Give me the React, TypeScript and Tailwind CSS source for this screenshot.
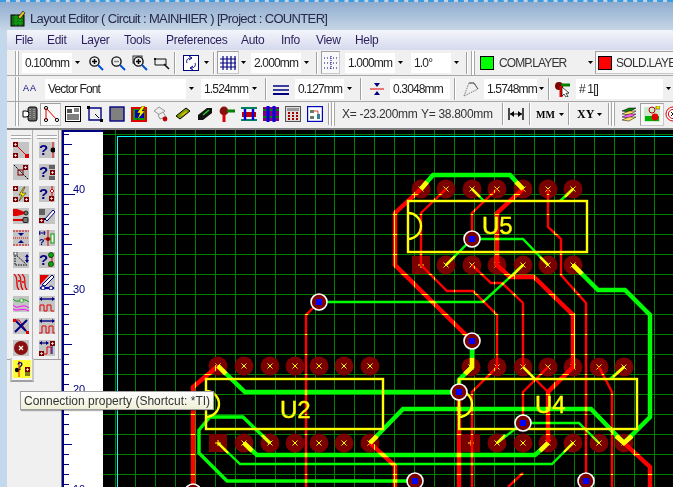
import React from "react";

type Pt = [number, number];
type Trace = { pts: Pt[]; w: number };

const FONT = "font-['Liberation_Sans',Arial,sans-serif]";

// pcb data, in page coordinates
const redTraces: Trace[] = [
  { w: 4, pts: [[421, 189], [395, 213], [395, 265], [472, 341]] },
  { w: 2, pts: [[446, 189], [421, 213], [421, 265], [447, 291], [473, 291], [497, 315], [497, 367], [472, 392], [472, 487]] },
  { w: 2, pts: [[472, 265], [491, 283], [502, 283], [523, 303], [523, 367], [548, 392]] },
  { w: 4, pts: [[523, 189], [497, 213], [497, 265], [510, 277], [534, 277], [573, 315], [573, 367], [548, 392], [548, 443]] },
  { w: 2, pts: [[497, 189], [472, 213], [472, 239]] },
  { w: 2, pts: [[548, 189], [548, 227], [561, 239], [561, 275], [586, 303], [586, 481]] },
  { w: 2, pts: [[548, 367], [523, 392], [523, 423]] },
  { w: 2, pts: [[599, 367], [612, 392], [612, 487]] },
  { w: 4, pts: [[459, 392], [459, 487]] },
  { w: 4, pts: [[624, 443], [650, 467], [650, 487]] },
  { w: 2, pts: [[523, 473], [508, 487]] },
  { w: 4, pts: [[218, 366], [193, 387], [193, 487]] },
  { w: 2, pts: [[319, 302], [306, 315], [306, 487]] },
  { w: 4, pts: [[370, 443], [395, 466], [395, 487]] },
];

const greenTraces: Trace[] = [
  { w: 4, pts: [[421, 189], [433, 175], [510, 175], [523, 189]] },
  { w: 2, pts: [[446, 265], [472, 239], [523, 239], [548, 265]] },
  { w: 2, pts: [[472, 189], [484, 201]] },
  { w: 2, pts: [[573, 189], [560, 201]] },
  { w: 2, pts: [[319, 302], [483, 302], [523, 265]] },
  { w: 4, pts: [[573, 265], [598, 290], [625, 290], [650, 315], [650, 417], [624, 443]] },
  { w: 4, pts: [[472, 341], [472, 367], [459, 380], [459, 392]] },
  { w: 4, pts: [[218, 366], [245, 392], [459, 392]] },
  { w: 4, pts: [[370, 443], [403, 409], [591, 409], [624, 443]] },
  { w: 2, pts: [[218, 443], [240, 464], [552, 464], [573, 443]] },
  { w: 4, pts: [[244, 443], [257, 455], [535, 455], [548, 443]] },
  { w: 3, pts: [[415, 481], [227, 481], [199, 453], [199, 430], [210, 417], [243, 417], [270, 443]] },
  { w: 2, pts: [[497, 443], [523, 423], [579, 423], [599, 443]] },
  { w: 2, pts: [[523, 367], [535, 379]] },
  { w: 2, pts: [[624, 367], [610, 379]] },
];

const yellowStubs: Trace[] = [
  { w: 4, pts: [[421, 189], [427, 182]] },
  { w: 4, pts: [[523, 189], [516, 182]] },
  { w: 2, pts: [[472, 189], [480, 197]] },
  { w: 2, pts: [[573, 189], [565, 197]] },
  { w: 2, pts: [[446, 265], [455, 256]] },
  { w: 2, pts: [[548, 265], [540, 257]] },
  { w: 2, pts: [[523, 265], [512, 276]] },
  { w: 4, pts: [[573, 265], [582, 274]] },
  { w: 4, pts: [[472, 358], [472, 367], [465, 374]] },
  { w: 2, pts: [[523, 367], [533, 377]] },
  { w: 2, pts: [[624, 367], [613, 377]] },
  { w: 2, pts: [[497, 443], [505, 435]] },
  { w: 2, pts: [[573, 443], [564, 452]] },
  { w: 4, pts: [[548, 443], [540, 451]] },
  { w: 4, pts: [[616, 436], [624, 443], [632, 436]] },
  { w: 4, pts: [[218, 366], [226, 374]] },
  { w: 2, pts: [[218, 443], [228, 453]] },
  { w: 4, pts: [[244, 443], [252, 451]] },
  { w: 2, pts: [[270, 443], [262, 435]] },
  { w: 4, pts: [[370, 443], [377, 436]] },
];

const chips = [
  { top: 189, bottom: 265, x: [421, 446, 472, 497, 523, 548, 573], box: [408, 201, 587, 252], label: "U5", lx: 482, ly: 234 },
  { top: 367, bottom: 443, x: [471, 497, 523, 548, 573, 599, 624], box: [459, 379, 637, 429], label: "U4", lx: 535, ly: 413 },
  { top: 366, bottom: 443, x: [218, 244, 270, 295, 319, 344, 370], box: [206, 379, 383, 429], label: "U2", lx: 280, ly: 418 },
];

const vias: Pt[] = [[472, 239], [319, 302], [472, 341], [459, 392], [523, 423], [586, 481], [415, 481], [193, 492]];

const gridX = Array.from({ length: 29 }, (_, i) => Math.round(115 + i * 19.95));
const gridY = Array.from({ length: 18 }, (_, i) => 134 + i * 20);

const toPoints = (pts: Pt[]) => pts.map((p) => p.join(",")).join(" ");

function Lines({ list, color }: { list: Trace[]; color: string }) {
  return (
    <>
      {list.map((t, i) => (
        <polyline key={i} points={toPoints(t.pts)} fill="none" stroke={color} strokeWidth={t.w + 0.4} strokeLinejoin="miter" />
      ))}
    </>
  );
}

function Grid({ color }: { color: string }) {
  return (
    <g shapeRendering="crispEdges">
      {gridX.map((x) => (
        <line key={x} x1={x + 0.5} x2={x + 0.5} y1={130} y2={487} stroke={color} />
      ))}
      {gridY.map((y) => (
        <line key={y} x1={103} x2={673} y1={y + 0.5} y2={y + 0.5} stroke={color} />
      ))}
    </g>
  );
}

function Pad({ x, y, square }: { x: number; y: number; square?: boolean }) {
  return (
    <g>
      {square ? (
        <rect x={x - 9} y={y - 9} width={18} height={18} fill="#7b0000" />
      ) : (
        <circle cx={x} cy={y} r={9.5} fill="#7b0000" />
      )}
      {square ? (
        <path d={`M${x - 3} ${y}h6M${x} ${y - 3}v6`} stroke="#ffff00" />
      ) : (
        <path d={`M${x - 2.5} ${y - 2.5}l5 5M${x + 2.5} ${y - 2.5}l-5 5`} stroke="#ffff00" />
      )}
    </g>
  );
}

function Board() {
  return (
    <svg viewBox="103 130 570 357" className="block h-[357px] w-[570px]">
      <rect x={103} y={130} width={570} height={357} fill="#000" />
      <Grid color="#008000" />
      <g shapeRendering="crispEdges">
        <line x1={117.5} x2={117.5} y1={136} y2={487} stroke="#00ffff" />
        <line x1={117} x2={673} y1={136.5} y2={136.5} stroke="#00ffff" />
      </g>
      {chips.map((c) => (
        <g key={c.label}>
          {c.x.map((x, i) => (
            <React.Fragment key={x}>
              <Pad x={x} y={c.top} />
              <Pad x={x} y={c.bottom} square={i === 0} />
            </React.Fragment>
          ))}
        </g>
      ))}
      <mask id="on-red" maskUnits="userSpaceOnUse" x={103} y={130} width={570} height={357}>
        <Lines list={redTraces} color="#fff" />
      </mask>
      <Lines list={redTraces} color="#ff0000" />
      <g mask="url(#on-red)">
        <Grid color="#ffff00" />
      </g>
      <g className="mix-blend-screen">
        <Lines list={greenTraces} color="#00ff00" />
      </g>
      <Lines list={yellowStubs} color="#ffff00" />
      {chips.map((c) => {
        const [x1, y1, x2, y2] = c.box;
        return (
          <g key={c.label} fill="none" stroke="#ffff00" strokeWidth={2.4}>
            <rect x={x1} y={y1} width={x2 - x1} height={y2 - y1} />
            <path d={`M${x1} ${y1 + 12}A13 13 0 0 1 ${x1} ${y1 + 38}`} />
          </g>
        );
      })}
      {chips.map((c) => (
        <text
          key={c.label}
          x={c.lx}
          y={c.ly}
          fill="#ffff00"
          stroke="#ffff00"
          strokeWidth={0.4}
          className="font-['Liberation_Sans',Arial,sans-serif] text-[24px]"
        >
          {c.label}
        </text>
      ))}
      {vias.map(([x, y]) => (
        <g key={`${x}-${y}`}>
          <circle cx={x} cy={y} r={8} fill="#7b0000" stroke="#fff" strokeWidth={1.6} />
          <rect x={x - 3} y={y - 3} width={6} height={6} fill="#0000ff" />
        </g>
      ))}
    </svg>
  );
}

const rulerTicks = Array.from({ length: 36 }, (_, i) => 134 + i * 10);

function Ruler() {
  return (
    <svg viewBox="62 130 41 357" className="block h-[357px] w-[41px] shrink-0">
      <rect x={62} y={130} width={41} height={357} fill="#fff" />
      <path d="M63 130V487M62 131H103" stroke="#000080" strokeWidth={2} fill="none" />
      {rulerTicks.map((y) => {
        const mod = (y - 194 + 1000) % 100;
        const len = mod === 0 ? 75 : mod === 50 ? 72 : 69;
        return <line key={y} x1={63} x2={len} y1={y + 0.5} y2={y + 0.5} stroke="#000080" />;
      })}
      {[[40, 194], [30, 294], [20, 394], [10, 494]].map(([n, y]) => (
        <text key={n} x={73} y={y - 1} fill="#000080" className="font-['Liberation_Sans',Arial,sans-serif] text-[11px]">
          {n}
        </text>
      ))}
    </svg>
  );
}

function Drop({ className = "" }: { className?: string }) {
  return (
    <svg viewBox="0 0 5 3" className={`h-[3px] w-[5px] shrink-0 ${className}`}>
      <path d="M0 0h5L2.5 3z" fill="#000" />
    </svg>
  );
}

function Combo({ text, className, arrow = true }: { text: string; className: string; arrow?: boolean }) {
  return (
    <div className={`flex h-[20px] shrink-0 items-center justify-between overflow-hidden bg-white pl-[3px] text-[12px] tracking-[-0.85px] text-[#222] ${className}`}>
      <span className="whitespace-nowrap">{text}</span>
      {arrow && (
        <span className="flex h-full w-[10px] shrink-0 items-center justify-center bg-[#f0f0f0]">
          <Drop />
        </span>
      )}
    </div>
  );
}

function Sep({ className }: { className: string }) {
  return <div className={`h-[22px] w-[2px] shrink-0 border-l border-r border-l-[#a0a0a0] border-r-white ${className}`} />;
}

function Grip({ className }: { className: string }) {
  return <div className={`h-[24px] w-[4px] shrink-0 border-x border-x-[#a8a8a8] bg-white ${className}`} />;
}

function Ico({ children, className = "" }: { children: React.ReactNode; className?: string }) {
  return (
    <svg viewBox="0 0 16 16" className={`block h-[16px] w-[16px] shrink-0 ${className}`}>
      {children}
    </svg>
  );
}

const Pressed = ({ className, children }: { className: string; children: React.ReactNode }) => (
  <div className={`flex h-[23px] shrink-0 items-center justify-center border border-[#c8c8c8] border-t-[#a0a0a0] border-l-[#a0a0a0] bg-[#f8f8f8] ${className}`}>
    {children}
  </div>
);

function Mag({ mark, className }: { mark: "plus" | "minus" | "fit"; className: string }) {
  return (
    <Ico className={className}>
      {mark === "fit" && <rect x={1} y={1} width={9} height={7} fill="#ddd" stroke="#333" />}
      <circle cx={6.5} cy={6.5} r={4.6} fill="#eee" stroke="#111" strokeWidth={1.4} />
      <path d={mark === "minus" ? "M4 6.5h5" : "M4 6.5h5M6.5 4v5"} stroke={mark === "minus" ? "#888" : "#000"} strokeWidth={1.5} />
      <path d="M10 10l5 5" stroke="#0050d0" strokeWidth={2} />
    </Ico>
  );
}

// square pad used inside the small tool icons
const P = ({ x, y }: { x: number; y: number }) => (
  <g>
    <rect x={x} y={y} width={5} height={5} fill="#7b0000" />
    <path d={`M${x + 1} ${y + 2.5}h3M${x + 2.5} ${y + 1}v3`} stroke="#fff" strokeWidth={0.7} />
  </g>
);

const Q = ({ x = 0, y = 13, size = 15 }: { x?: number; y?: number; size?: number }) => (
  <text x={x} y={y} fill="#000080" fontWeight={700} className="font-['Liberation_Sans',Arial,sans-serif]" fontSize={size}>
    ?
  </text>
);

const leftTools: React.ReactNode[] = [
  <><path d="M3 3l11 11" stroke="#e00000" /><P x={0} y={0} /><P x={0} y={11} /><rect x={12} y={12} width={4} height={4} fill="#e00000" /></>,
  <><path d="M1 1l14 14" stroke="#000" strokeDasharray="2 1" /><P x={10} y={1} /><rect x={5} y={6} width={5} height={5} fill="none" stroke="#7b0000" /></>,
  <><P x={0} y={0} /><P x={0} y={11} /><P x={11} y={11} /><path d="M11 1L6 9h3l-3 6 7-8H9l3-6z" fill="#ffee00" stroke="#000" strokeWidth={0.5} /></>,
  <><path d="M0 1h4l8 3v2l-8 2H0z" fill="#e00000" /><circle cx={13} cy={5} r={2} fill="#777" stroke="#222" /><path d="M0 12h10" stroke="#e00000" strokeWidth={2} /><rect x={10} y={9.5} width={5} height={5} rx={1} fill="#777" stroke="#222" /></>,
  <><path d="M0 1h16M0 15h16" stroke="#e00000" strokeDasharray="2 1" /><path d="M0 8h16" stroke="#e00000" strokeDasharray="1 1" /><path d="M8 6L5 3h6zM8 10l-3 3h6z" fill="#000080" /></>,
  <><path d="M2 1v12h12M2 2l11 10" stroke="#000" strokeDasharray="1.5 1" fill="none" /><rect x={1} y={0} width={3} height={3} fill="#fff" stroke="#000" strokeWidth={0.6} /><path d="M14 3v7" stroke="#000080" strokeWidth={1.4} /><path d="M12 5l2-3 2 3M12 8l2 3 2-3" fill="#000080" /></>,
  <><path d="M1 0c6 5 0 10 5 16M5 0c6 5 0 10 5 16M9 0c6 5 0 10 5 16" stroke="#e00000" fill="none" strokeWidth={1.3} /><circle cx={6} cy={7} r={1} fill="#e00000" /><circle cx={10} cy={8} r={1} fill="#e00000" /></>,
  <><path d="M0 3c5 6 9-3 16 3" stroke="#00a000" fill="none" /><path d="M0 9c5 6 9-3 16 3" stroke="#ff00ff" fill="none" /><path d="M0 13c5 3 9-2 16 2" stroke="#ff00ff" fill="none" /><rect x={7} y={3} width={3} height={3} fill="#fff" stroke="#00a000" strokeWidth={0.6} /></>,
  <><path d="M1 2h5l8 12" stroke="#e00000" fill="none" /><path d="M2 14L14 2M3 3l10 10" stroke="#000080" strokeWidth={2} /><rect x={0} y={1} width={3} height={3} fill="#e00000" /><rect x={13} y={13} width={3} height={3} fill="#e00000" /></>,
  <><circle cx={8} cy={8} r={7} fill="#8a1010" /><path d="M6 6l4 4M10 6l-4 4" stroke="#fff" strokeWidth={1.2} /></>,
];

const rightTools: React.ReactNode[] = [
  <><Q /><path d="M14 0v16" stroke="#e00000" /><circle cx={14} cy={8} r={2.5} fill="#000" /></>,
  <><Q /><path d="M10 2h6M10 4h6M10 13h6M10 15h6" stroke="#000" /><P x={11} y={6} /></>,
  <><Q /><path d="M13 0v16" stroke="#e00000" /><path d="M13 3l2 2-2 2-2-2z" fill="#fff" stroke="#e00000" /><P x={10} y={10} /></>,
  <><path d="M0 2h6M0 4h6M0 6h6" stroke="#000" /><P x={0} y={10} /><path d="M5 11h5" stroke="#000" strokeDasharray="1 1" strokeWidth={2} /><path d="M6 11L14 2l2 2-8 9z" fill="#fff" stroke="#000080" /></>,
  <><path d="M1 1L0 3l1 2M5 1l1 2-1 2M0 3h6" stroke="#000080" fill="none" /><Q x={0} y={15} size={9} /><path d="M9 0v16M5 9h7" stroke="#e00000" /><circle cx={9} cy={9} r={2} fill="#a00000" /><rect x={12} y={4} width={3} height={9} fill="#fff" stroke="#00a000" /></>,
  <><Q /><path d="M10 5h3v6h-3v4" stroke="#e00000" fill="none" /><circle cx={12} cy={3} r={2.5} fill="#00b000" stroke="#000" strokeWidth={0.6} /><circle cx={12} cy={12} r={2.5} fill="#00b000" stroke="#000" strokeWidth={0.6} /></>,
  <><path d="M1 1h9L1 11z" fill="#e00000" /><path d="M1 14h14" stroke="#0000c0" strokeWidth={2} /><path d="M3 11L13 1l2 2L6 12z" fill="#fff" stroke="#000080" /><circle cx={4} cy={14} r={2} fill="#fff" stroke="#000080" /><circle cx={12} cy={14} r={2} fill="#fff" stroke="#000080" /></>,
  <><path d="M1 3h14" stroke="#000080" strokeWidth={1.4} /><path d="M0 3l3-2v4zM16 3l-3-2v4z" fill="#000080" /><path d="M1 15v-6h4v6h3V9h4v6h3" stroke="#e00000" fill="none" /></>,
  <><path d="M1 3h14" stroke="#000080" strokeWidth={1.4} /><path d="M0 3l3-2v4zM16 3l-3-2v4z" fill="#000080" /><path d="M0 15h3V8h4v7h3V8h4v7h2" stroke="#e00000" fill="none" /></>,
  <><path d="M1 3h8" stroke="#000080" strokeWidth={1.2} /><path d="M0 3l3-2v4zM10 3L7 1v4z" fill="#000080" /><P x={11} y={1} /><P x={0} y={11} /><path d="M5 14h3V7h4v7" stroke="#e00000" fill="none" /><path d="M13 6v8" stroke="#0000c0" /></>,
];

const rowThree: { cls: string; icon: React.ReactNode }[] = [
  { cls: "ml-[3px]", icon: <><rect x={6} y={1} width={9} height={14} rx={2} fill="#666" stroke="#000" /><path d="M8 3v10M12 3v10" stroke="#ccc" strokeDasharray="1 1" /><path d="M1 5h3a3 3 0 0 1 0 6H1z" fill="#fff" stroke="#000" /></> },
  { cls: "ml-[4px]", icon: null },
  { cls: "ml-[4px]", icon: <><rect x={0.5} y={0.5} width={15} height={15} fill="#fff" stroke="#000" /><path d="M2 3h5v4H2z" fill="#555" /><path d="M9 3h5M9 5h5M2 9h12M2 11h12M2 13h12" stroke="#000" /></> },
  { cls: "ml-[6px]", icon: <><path d="M2 2h12v12H2z" fill="none" stroke="#000080" strokeWidth={1.4} /><rect x={0} y={0} width={3} height={3} fill="#000" /><rect x={13} y={13} width={3} height={3} fill="#000" /><path d="M8 8l4 4" stroke="#000" /></> },
  { cls: "ml-[6px]", icon: <rect x={1} y={1} width={14} height={14} fill="#808080" stroke="#000080" strokeWidth={1.4} /> },
  { cls: "ml-[6px]", icon: <><rect x={1} y={2} width={14} height={13} fill="#00a000" stroke="#e00000" strokeWidth={2} /><rect x={4} y={4} width={9} height={8} fill="#0000c0" /><path d="M11 0L6 7h3L6 14l8-9h-3l3-5z" fill="#ffee00" stroke="#000" strokeWidth={0.4} /></> },
  { cls: "ml-[6px]", icon: <><path d="M1 5l5-4 6 4-5 4z" fill="#eee" stroke="#999" /><path d="M5 9l5-3 3 5-6 2z" fill="#eee" stroke="#999" /><circle cx={12} cy={13} r={2.4} fill="#c00000" /></> },
  { cls: "ml-[6px]", icon: <><path d="M1 10l10-8 4 3-10 8z" fill="#80a000" stroke="#000" /><path d="M6 9l5-4 1 1-5 4z" fill="#e0c000" /></> },
  { cls: "ml-[6px]", icon: <><path d="M1 9l9-7h5v5l-9 7H1z" fill="#111" /><path d="M6 9l6-5" stroke="#20d020" strokeWidth={1.6} /></> },
  { cls: "ml-[6px]", icon: <><circle cx={5} cy={5} r={4.4} fill="#8a1010" /><path d="M8 5h8" stroke="#008000" strokeWidth={3} /><path d="M5 8v8" stroke="#e00000" strokeWidth={3} /></> },
  { cls: "ml-[6px]", icon: <><path d="M0 2h16M0 14h16" stroke="#008060" strokeWidth={2} /><rect x={1} y={6} width={14} height={5} fill="#c00000" /><path d="M4 3v11M12 3v11" stroke="#0000e0" strokeWidth={2.4} /></> },
  { cls: "ml-[6px]", icon: <><rect x={0} y={1} width={16} height={14} fill="#800080" /><path d="M0 4h16M0 11h16" stroke="#008000" strokeWidth={2} /><path d="M5 0v16M11 0v16" stroke="#0000e0" strokeWidth={3} /></> },
  { cls: "ml-[6px]", icon: <><rect x={0.5} y={0.5} width={15} height={15} fill="#ddd" stroke="#555" /><rect x={2} y={2} width={12} height={3} fill="#999" /><path d="M3 7h2M7 7h2M11 7h2M3 10h2M7 10h2M11 10h2M3 13h2M7 13h2M11 13h2" stroke="#a00000" strokeWidth={2} /></> },
  { cls: "ml-[6px]", icon: <><rect x={0.5} y={0.5} width={15} height={15} fill="#fff" stroke="#0000c0" strokeWidth={1.4} /><rect x={3} y={4} width={4} height={3} fill="#608060" /><rect x={3} y={10} width={4} height={3} fill="#608060" /><rect x={10} y={8} width={3} height={5} fill="#308090" /><path d="M7 5h4v3" stroke="#e04040" fill="none" /></> },
];

const menu = [
  { t: "File", cls: "w-[32px]" },
  { t: "Edit", cls: "w-[34px]" },
  { t: "Layer", cls: "w-[43px]" },
  { t: "Tools", cls: "w-[42px]" },
  { t: "Preferences", cls: "w-[75px]" },
  { t: "Auto", cls: "w-[40px]" },
  { t: "Info", cls: "w-[35px]" },
  { t: "View", cls: "w-[39px]" },
  { t: "Help", cls: "w-[34px]" },
];

function ToolBox({ tools, className = "" }: { tools: React.ReactNode[]; className?: string }) {
  return (
    <div className={`flex h-[229px] w-[24px] shrink-0 flex-col items-center border-r border-r-[#b0b0b0] ${className}`}>
      <div className="mb-[3px] mt-[5px] h-[4px] w-[20px] border-y border-y-[#a8a8a8] bg-white" />
      <div className="flex flex-col gap-[6px]">
        {tools.map((icon, i) => (
          <Ico key={i} className="bg-[#c4c4c4]">
            {icon}
          </Ico>
        ))}
      </div>
    </div>
  );
}

export default function App() {
  return (
    <div className={`relative h-[487px] w-[673px] overflow-hidden bg-[#c4d8ec] ${FONT}`}>
      {/* title bar */}
      <div className="h-[30px] border-t-2 border-dashed border-t-[#3a9be0] bg-gradient-to-b from-[#8facce] to-[#c6d6e6]">
        <div className="flex h-[28px] items-center pl-[10px] pt-[5px]">
          <Ico>
            <rect x={1} y={4} width={13} height={11} fill="#1a6a1a" stroke="#000" />
            <path d="M4 6h9M4 9h9M4 12h9M6 4v11M10 4v11" stroke="#00c000" strokeWidth={0.8} />
            <path d="M8 6l5-6 2 2-5 6z" fill="#e8c020" stroke="#000" strokeWidth={0.6} />
          </Ico>
          <span className="ml-[4px] whitespace-nowrap text-[13px] tracking-[-0.65px] text-[#28284a]">Layout Editor ( Circuit : MAINHIER ) [Project : COUNTER]</span>
        </div>
      </div>

      <div className="ml-[7px]">
        {/* menu */}
        <div className="flex h-[20px] items-center bg-gradient-to-b from-[#f4f5fb] to-[#d6daee] pl-[8px] text-[12px] tracking-[-0.3px] text-[#2a1f5c]">
          {menu.map((m) => (
            <span key={m.t} className={m.cls}>
              {m.t}
            </span>
          ))}
        </div>

        {/* toolbar rows */}
        <div className="flex h-[26px] items-center overflow-hidden border-b border-b-[#a8a8a8] bg-[#f0f0f0]">
          <Grip className="ml-[8px]" />
          <Combo text="0.100mm" className="ml-[3px] w-[60px]" />
          <Mag mark="plus" className="ml-[6px]" />
          <Mag mark="minus" className="ml-[6px]" />
          <Mag mark="fit" className="ml-[6px]" />
          <Ico className="ml-[6px]">
            <path d="M1 4h11v6H1z" fill="#eee" stroke="#111" />
            <path d="M10 9l5 5" stroke="#111" strokeWidth={1.6} />
            <rect x={0} y={3} width={2} height={2} fill="#111" />
          </Ico>
          <Sep className="ml-[4px]" />
          <Ico className="ml-[7px]">
            <rect x={0.5} y={0.5} width={15} height={15} fill="#fff" stroke="#000080" />
            <path d="M8 3c-4 0-5 3-4 5M8 13c4 0 5-3 4-5M6 1l3 2-3 2M10 11l-3 2 3 2" stroke="#000080" fill="none" />
          </Ico>
          <Drop className="ml-[5px]" />
          <Sep className="ml-[4px]" />
          <Pressed className="ml-[2px] w-[22px]">
            <Ico>
              <path d="M3 1v14M7 1v14M11 1v14M15 1v14M0 4h16M0 8h16M0 12h16" stroke="#000080" strokeWidth={1.2} />
            </Ico>
          </Pressed>
          <Drop className="ml-[2px]" />
          <Combo text="2.000mm" className="ml-[5px] w-[60px]" />
          <Sep className="ml-[5px]" />
          <Pressed className="ml-[3px] w-[19px]">
            <Ico>
              <path d="M1 3h14M1 8h14M1 13h14" stroke="#000080" strokeDasharray="1 2" />
              <path d="M8 1v14" stroke="#000080" strokeDasharray="1 1" />
            </Ico>
          </Pressed>
          <Combo text="1.000mm" className="ml-[5px] w-[60px]" />
          <Combo text="1.0°" className="ml-[6px] w-[50px]" />
          <Sep className="ml-[5px]" />
          <Grip className="ml-[3px]" />
          <span className="ml-[5px] h-[14px] w-[14px] shrink-0 border border-black bg-[#00ff00]" />
          <span className="ml-[5px] w-[89px] shrink-0 text-[12px] tracking-[-0.9px] text-[#333]">COMP.LAYER</span>
          <Drop />
          <Pressed className="ml-[2px] w-[90px] justify-start pl-[2px]">
            <span className="h-[14px] w-[14px] shrink-0 border border-black bg-[#ff0000]" />
            <span className="ml-[4px] whitespace-nowrap text-[12px] tracking-[-0.7px] text-[#333]">SOLD.LAYER</span>
          </Pressed>
        </div>

        <div className="flex h-[26px] items-center overflow-hidden border-b border-b-[#a8a8a8] bg-[#f0f0f0]">
          <Grip className="ml-[8px]" />
          <span className="ml-[4px] w-[18px] shrink-0 text-[9px] tracking-[1px] text-[#000080]">AA</span>
          <Combo text="Vector Font" className="ml-[4px] w-[151px]" />
          <Combo text="1.524mm" className="ml-[5px] w-[58px]" />
          <Sep className="ml-[6px]" />
          <Ico className="ml-[6px]">
            <path d="M0 5h16M0 9h16" stroke="#000080" strokeWidth={1.4} />
            <path d="M0 13h16" stroke="#000080" strokeWidth={2} />
          </Ico>
          <Combo text="0.127mm" className="ml-[6px] w-[59px]" />
          <Sep className="ml-[6px]" />
          <Ico className="ml-[7px]">
            <path d="M1 8h14" stroke="#e00000" />
            <path d="M8 6L5 2h6zM8 10l-3 4h6z" fill="#000080" />
          </Ico>
          <Combo text="0.3048mm" className="ml-[5px] w-[60px]" arrow={false} />
          <Sep className="ml-[4px]" />
          <Ico className="ml-[7px]">
            <path d="M1 15L6 2h5l4 6-14 7" fill="none" stroke="#777" strokeDasharray="1.5 1" />
            <path d="M6 2h5l4 6" fill="none" stroke="#555" />
          </Ico>
          <Combo text="1.5748mm" className="ml-[5px] w-[60px]" />
          <Sep className="ml-[4px]" />
          <Ico className="ml-[5px]">
            <circle cx={4} cy={5} r={4} fill="#7b0000" />
            <path d="M6 4h9" stroke="#008000" strokeWidth={3} />
            <path d="M6 5v11" stroke="#e00000" strokeWidth={3} />
            <path d="M7 6l7 6-3 .5 2 3-2 .5-2-3-2 2z" fill="#fff" stroke="#000" strokeWidth={0.7} />
          </Ico>
          <Combo text="# 1[]" className="ml-[5px] w-[97px] pl-[3px]" />
        </div>

        <div className="flex h-[28px] items-center overflow-hidden border-b-2 border-b-[#808080] bg-[#f0f0f0] pb-[2px]">
          <Grip className="ml-[8px]" />
          {rowThree.map((b, i) =>
            i === 1 ? (
              <Pressed key={i} className="ml-[2px] w-[21px]">
                <Ico>
                  <path d="M3 2l11 12" stroke="#e00000" />
                  <circle cx={3} cy={2} r={1.6} fill="#fff" stroke="#000" />
                  <circle cx={3} cy={14} r={1.6} fill="#fff" stroke="#000" />
                  <path d="M3 2v12" stroke="#e00000" />
                  <circle cx={14} cy={14} r={1.6} fill="#fff" stroke="#000" />
                </Ico>
              </Pressed>
            ) : (
              <Ico key={i} className={b.cls}>
                {b.icon}
              </Ico>
            ),
          )}
          <Sep className="ml-[5px]" />
          <Grip className="ml-[1px]" />
          <span className="ml-[7px] w-[72px] shrink-0 whitespace-nowrap text-[12px] tracking-[-0.3px] text-[#333]">X= -23.200mm</span>
          <span className="ml-[7px] w-[72px] shrink-0 whitespace-nowrap text-[12px] tracking-[-0.3px] text-[#333]">Y= 38.800mm</span>
          <Sep className="ml-[9px]" />
          <Ico className="ml-[4px]">
            <path d="M1 2v12M15 2v12" stroke="#000" strokeWidth={1.4} />
            <path d="M2 8h12" stroke="#000" />
            <path d="M2 8l4-3v6zM14 8l-4-3v6z" fill="#000" />
          </Ico>
          <Sep className="ml-[5px]" />
          <span className="ml-[5px] w-[23px] shrink-0 font-['Liberation_Serif',serif] text-[10px] font-bold">MM</span>
          <Drop />
          <Sep className="ml-[4px]" />
          <span className="ml-[7px] w-[20px] shrink-0 font-['Liberation_Serif',serif] text-[12px] font-bold">XY</span>
          <Drop />
          <Sep className="ml-[6px]" />
          <Grip className="ml-[1px]" />
          <Ico className="ml-[6px]">
            <path d="M1 5l7-3h7l-7 4z" fill="#008000" stroke="#000" strokeWidth={0.5} />
            <path d="M1 8l7-3h7l-7 4z" fill="#ffe060" stroke="#000" strokeWidth={0.5} />
            <path d="M1 11l7-3h7l-7 4z" fill="#ff60ff" stroke="#000" strokeWidth={0.5} />
            <path d="M1 14l7-3h7l-7 4z" fill="#ffe060" stroke="#000" strokeWidth={0.5} />
          </Ico>
          <Pressed className="ml-[3px] w-[24px]">
            <Ico>
              <rect x={0} y={1} width={16} height={15} fill="#cfe8d0" />
              <circle cx={8} cy={4} r={3} fill="none" stroke="#c00000" />
              <rect x={12} y={0} width={4} height={3} fill="#ffee00" stroke="#000" strokeWidth={0.4} />
              <rect x={1} y={10} width={14} height={5} fill="#00b000" />
              <circle cx={11} cy={11} r={3.4} fill="#e00000" />
            </Ico>
          </Pressed>
          <Ico className="ml-[1px]">
            <circle cx={8} cy={8} r={7} fill="#fff" stroke="#e00000" />
            <circle cx={8} cy={8} r={4.6} fill="none" stroke="#e00000" />
            <path d="M6 6l4 4M10 6l-4 4" stroke="#000" />
          </Ico>
        </div>

        {/* work area */}
        <div className="flex h-[357px]">
          <div className="h-full w-[54px] shrink-0 bg-[#f0f0f0]">
            <div className="flex border-b border-b-[#a0a0a0]">
              <ToolBox tools={leftTools} className="ml-[2px]" />
              <ToolBox tools={rightTools} className="ml-[2px]" />
            </div>
            <div className="ml-[3px] mt-[-2px] flex h-[24px] w-[24px] items-center justify-center border-r-2 border-b-2 border-l-2 border-[#c8c8c8] border-b-[#a0a0a0] bg-[#f4f4f4]">
              <div className="flex h-[18px] w-[18px] items-center justify-center bg-[#ffff30]">
                <Ico>
                  <circle cx={3} cy={9} r={2.2} fill="#000" />
                  <path d="M5 0v16" stroke="#e00000" />
                  <path d="M11 14h5M11 12h5" stroke="#000" />
                  <P x={11} y={6} />
                  <Q x={3} y={9} size={10} />
                </Ico>
              </div>
            </div>
          </div>
          <div className="h-full w-[1px] shrink-0 bg-[#808080]" />
          <Ruler />
          <Board />
        </div>
      </div>

      {/* tooltip */}
      <div className="absolute left-[20px] top-[391px] flex h-[19px] w-[194px] items-center whitespace-nowrap border border-[#a0a0a0] bg-gradient-to-b from-white to-[#f0f0d8] pl-[3px] text-[12px] text-[#333] shadow-[1px_1px_1px_rgba(0,0,0,0.3)]">
        Connection property (Shortcut: *TI)
      </div>
    </div>
  );
}
